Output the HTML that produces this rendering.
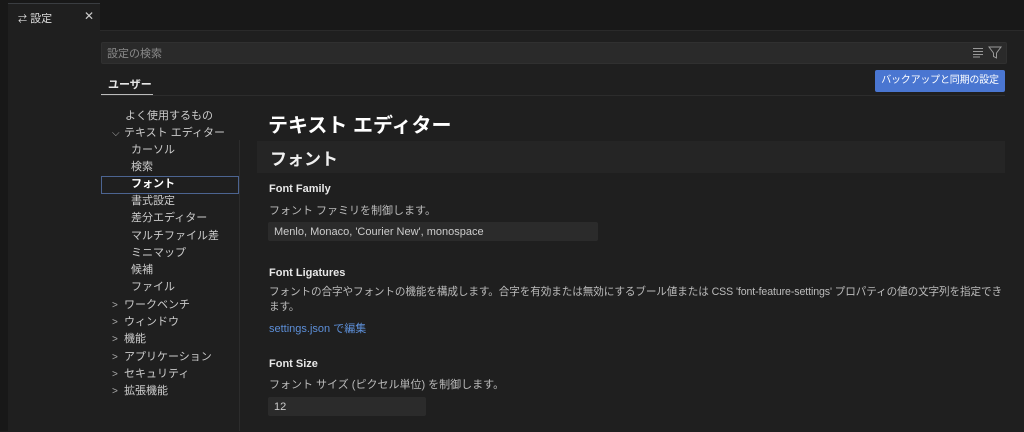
<!DOCTYPE html>
<html><head><meta charset="utf-8"><style>
body{margin:0;width:1024px;height:431px;background:#1f1f1f;overflow:hidden;font-family:"Liberation Sans","Noto Sans CJK JP",sans-serif;color:#ccc;position:relative}
.a{position:absolute;white-space:nowrap}
.tree div{position:absolute;font-size:11px;color:#ccc;height:17px;line-height:17px}
.chev{display:inline-block;width:12px;color:#aaa;font-size:10px}
</style></head><body>
<div class="a" style="left:0;top:0;width:1024px;height:30px;background:#181818;border-bottom:1px solid #2a2a2a"></div>
<div class="a" style="left:0;top:0;width:8px;height:431px;background:#181818"></div>
<div class="a" style="left:8px;top:3px;width:92px;height:428px;background:#1f1f1f;border-top:1px solid #3a3d41"></div>
<div class="a" style="left:18px;top:10px;font-size:11px;color:#ddd"><span style="font-size:9px">⇄</span> 設定</div>
<div class="a" style="left:84px;top:9px;font-size:12px;color:#ccc">✕</div>
<div class="a" style="left:101px;top:42px;width:904px;height:20px;background:#2a2a2a;border-radius:2px;border:1px solid #303030"></div>
<div class="a" style="left:107px;top:45px;font-size:11px;color:#8a8a8a">設定の検索</div>
<svg class="a" style="left:972px;top:46px" width="32" height="13"><g stroke="#999" stroke-width="1"><path d="M1 2.5h10M1 5.5h10M1 8.5h10M1 11h7"/><path d="M17 1h12l-4.5 6v5l-3-1.5v-3.5z" fill="none"/></g></svg>
<div class="a" style="left:101px;top:95px;width:904px;height:1px;background:#2c2c2c"></div>
<div class="a" style="left:108px;top:76px;font-size:11px;color:#e6e6e6;font-weight:bold">ユーザー</div>
<div class="a" style="left:101px;top:94px;width:52px;height:1px;background:#bbb"></div>
<div class="a" style="left:875px;top:70px;width:130px;height:22px;background:#4a76d1;border-radius:2px;color:#fff;font-size:10px;line-height:22px;text-align:center;letter-spacing:-0.2px">バックアップと同期の設定</div>
<div class="a" style="left:239px;top:140px;width:1px;height:291px;background:#2c2c2c"></div>
<div class="a" style="left:101px;top:176px;width:136px;height:16px;border:1px solid #4c6491"></div>
<div class="tree">
<div style="left:125px;top:108px">よく使用するもの</div>
<div style="left:112px;top:125px"><span class="chev">⌵</span>テキスト エディター</div>
<div style="left:131px;top:142px">カーソル</div>
<div style="left:131px;top:159px">検索</div>
<div style="left:131px;top:176px;color:#fff;font-weight:bold">フォント</div>
<div style="left:131px;top:193px">書式設定</div>
<div style="left:131px;top:210px">差分エディター</div>
<div style="left:131px;top:228px;width:106px;overflow:hidden">マルチファイル差分...</div>
<div style="left:131px;top:245px">ミニマップ</div>
<div style="left:131px;top:262px">候補</div>
<div style="left:131px;top:279px">ファイル</div>
<div style="left:112px;top:297px"><span class="chev">&gt;</span>ワークベンチ</div>
<div style="left:112px;top:314px"><span class="chev">&gt;</span>ウィンドウ</div>
<div style="left:112px;top:331px"><span class="chev">&gt;</span>機能</div>
<div style="left:112px;top:349px"><span class="chev">&gt;</span>アプリケーション</div>
<div style="left:112px;top:366px"><span class="chev">&gt;</span>セキュリティ</div>
<div style="left:112px;top:383px"><span class="chev">&gt;</span>拡張機能</div>
</div>
<div class="a" style="left:268px;top:109px;font-size:20px;font-weight:bold;color:#fff">テキスト エディター</div>
<div class="a" style="left:257px;top:141px;width:748px;height:32px;background:#252525"></div>
<div class="a" style="left:270px;top:145px;font-size:17px;font-weight:bold;color:#f0f0f0">フォント</div>
<div class="a" style="left:269px;top:183px;font-size:11px;font-weight:bold;color:#e8e8e8">Font Family</div>
<div class="a" style="left:269px;top:202px;font-size:11px;color:#bbb">フォント ファミリを制御します。</div>
<div class="a" style="left:268px;top:222px;width:330px;height:19px;background:#2b2b2b;border-radius:2px"></div>
<div class="a" style="left:274px;top:226px;font-size:11px;color:#ccc">Menlo, Monaco, 'Courier New', monospace</div>
<div class="a" style="left:269px;top:267px;font-size:11px;font-weight:bold;color:#e8e8e8">Font Ligatures</div>
<div class="a" style="left:269px;top:285px;font-size:10.6px;color:#bbb;line-height:15px;letter-spacing:-0.1px">フォントの合字やフォントの機能を構成します。合字を有効または無効にするブール値または CSS 'font-feature-settings' プロパティの値の文字列を指定でき<br>ます。</div>
<div class="a" style="left:269px;top:320px;font-size:11px;color:#5d8fd8">settings.json で編集</div>
<div class="a" style="left:269px;top:358px;font-size:11px;font-weight:bold;color:#e8e8e8">Font Size</div>
<div class="a" style="left:269px;top:376px;font-size:11px;color:#bbb">フォント サイズ (ピクセル単位) を制御します。</div>
<div class="a" style="left:268px;top:397px;width:158px;height:19px;background:#2b2b2b;border-radius:2px"></div>
<div class="a" style="left:274px;top:401px;font-size:11px;color:#ccc">12</div>
</body></html>
